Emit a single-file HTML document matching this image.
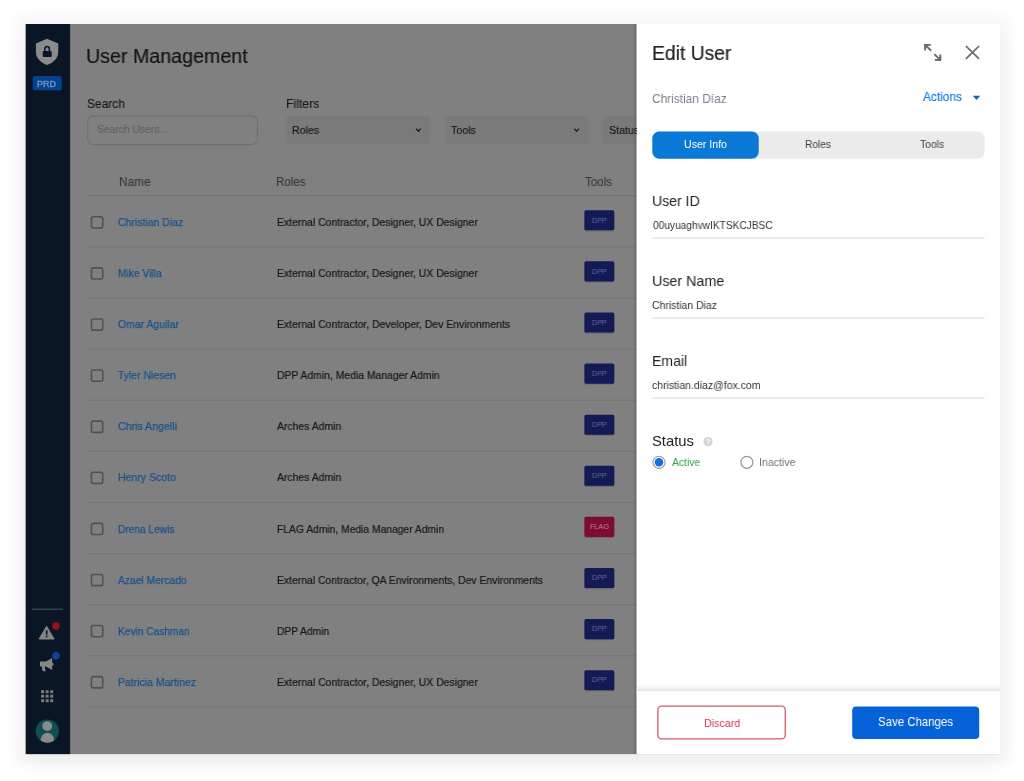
<!DOCTYPE html>
<html lang="en">
<head>
<meta charset="utf-8">
<title>User Management</title>
<style>
*{box-sizing:border-box;margin:0;padding:0}
html,body{width:1024px;height:781px;overflow:hidden;background:#fff}
body{position:relative;font-family:"Liberation Sans",Arial,sans-serif;color:#1a1a1a}
svg{position:absolute;left:0;top:0;overflow:visible}
.shadow{position:absolute;left:26px;top:24px;width:974px;height:730px;background:#fff;box-shadow:0 0 8px 11px rgba(0,0,0,.024),0 8px 22px rgba(0,0,0,.062)}
.t{position:absolute;white-space:nowrap;line-height:1;transform-origin:0 50%;will-change:transform}
</style>
</head>
<body>
<div class="shadow"></div>
<svg width="1024" height="781" viewBox="0 0 1024 781">
<defs>
<linearGradient id="gl" x1="0" y1="0" x2="1" y2="0"><stop offset="0" stop-color="#000" stop-opacity="0"/><stop offset="1" stop-color="#000" stop-opacity=".22"/></linearGradient>
<linearGradient id="gf" x1="0" y1="0" x2="0" y2="1"><stop offset="0" stop-color="#000" stop-opacity="0"/><stop offset="1" stop-color="#000" stop-opacity=".085"/></linearGradient>
<clipPath id="av"><circle cx="47.3" cy="731.05" r="11.6"/></clipPath>
</defs>
<!-- dimmed main area -->
<rect x="25.75" y="24" width="974.25" height="730.1" fill="#808080"/>
<rect x="87.65" y="115.8" width="169.85" height="28.9" rx="6" fill="none" stroke="#6f6f6f" stroke-width="1.2"/>
<rect x="286.3" y="115.8" width="143.7" height="28.1" rx="3.5" fill="#7a7a7a"/>
<rect x="444.7" y="115.8" width="143.1" height="28.1" rx="3.5" fill="#7a7a7a"/>
<rect x="602.3" y="115.8" width="60" height="28.1" rx="3.5" fill="#7a7a7a"/>
<path d="M416 128.6 418.4 131.2 420.8 128.6M574.2 128.6 576.6 131.2 579 128.6" fill="none" stroke="#1c1c1c" stroke-width="1.3"/>
<rect x="88" y="195.00" width="548.5" height="1.2" fill="#747474"/>
<rect x="91.5" y="216.75" width="11.2" height="11.2" rx="1.7" fill="none" stroke="#515151" stroke-width="1.6"/>
<rect x="584.4" y="211.15" width="29.9" height="20.3" rx="1.8" fill="#000" opacity=".16"/>
<rect x="584.4" y="210.25" width="29.9" height="20.1" rx="1.6" fill="#141a54"/>
<rect x="88" y="246.40" width="548.5" height="1.2" fill="#767676"/>
<rect x="91.5" y="267.85" width="11.2" height="11.2" rx="1.7" fill="none" stroke="#515151" stroke-width="1.6"/>
<rect x="584.4" y="262.25" width="29.9" height="20.3" rx="1.8" fill="#000" opacity=".16"/>
<rect x="584.4" y="261.35" width="29.9" height="20.1" rx="1.6" fill="#141a54"/>
<rect x="88" y="297.50" width="548.5" height="1.2" fill="#767676"/>
<rect x="91.5" y="318.95" width="11.2" height="11.2" rx="1.7" fill="none" stroke="#515151" stroke-width="1.6"/>
<rect x="584.4" y="313.35" width="29.9" height="20.3" rx="1.8" fill="#000" opacity=".16"/>
<rect x="584.4" y="312.45" width="29.9" height="20.1" rx="1.6" fill="#141a54"/>
<rect x="88" y="348.60" width="548.5" height="1.2" fill="#767676"/>
<rect x="91.5" y="370.05" width="11.2" height="11.2" rx="1.7" fill="none" stroke="#515151" stroke-width="1.6"/>
<rect x="584.4" y="364.45" width="29.9" height="20.3" rx="1.8" fill="#000" opacity=".16"/>
<rect x="584.4" y="363.55" width="29.9" height="20.1" rx="1.6" fill="#141a54"/>
<rect x="88" y="399.70" width="548.5" height="1.2" fill="#767676"/>
<rect x="91.5" y="421.15" width="11.2" height="11.2" rx="1.7" fill="none" stroke="#515151" stroke-width="1.6"/>
<rect x="584.4" y="415.55" width="29.9" height="20.3" rx="1.8" fill="#000" opacity=".16"/>
<rect x="584.4" y="414.65" width="29.9" height="20.1" rx="1.6" fill="#141a54"/>
<rect x="88" y="450.80" width="548.5" height="1.2" fill="#767676"/>
<rect x="91.5" y="472.25" width="11.2" height="11.2" rx="1.7" fill="none" stroke="#515151" stroke-width="1.6"/>
<rect x="584.4" y="466.65" width="29.9" height="20.3" rx="1.8" fill="#000" opacity=".16"/>
<rect x="584.4" y="465.75" width="29.9" height="20.1" rx="1.6" fill="#141a54"/>
<rect x="88" y="501.90" width="548.5" height="1.2" fill="#767676"/>
<rect x="91.5" y="523.35" width="11.2" height="11.2" rx="1.7" fill="none" stroke="#515151" stroke-width="1.6"/>
<rect x="584.4" y="517.75" width="29.9" height="20.3" rx="1.8" fill="#000" opacity=".16"/>
<rect x="584.4" y="516.85" width="29.9" height="20.1" rx="1.6" fill="#7c0c32"/>
<rect x="88" y="553.00" width="548.5" height="1.2" fill="#767676"/>
<rect x="91.5" y="574.45" width="11.2" height="11.2" rx="1.7" fill="none" stroke="#515151" stroke-width="1.6"/>
<rect x="584.4" y="568.85" width="29.9" height="20.3" rx="1.8" fill="#000" opacity=".16"/>
<rect x="584.4" y="567.95" width="29.9" height="20.1" rx="1.6" fill="#141a54"/>
<rect x="88" y="604.10" width="548.5" height="1.2" fill="#767676"/>
<rect x="91.5" y="625.55" width="11.2" height="11.2" rx="1.7" fill="none" stroke="#515151" stroke-width="1.6"/>
<rect x="584.4" y="619.95" width="29.9" height="20.3" rx="1.8" fill="#000" opacity=".16"/>
<rect x="584.4" y="619.05" width="29.9" height="20.1" rx="1.6" fill="#141a54"/>
<rect x="88" y="655.20" width="548.5" height="1.2" fill="#767676"/>
<rect x="91.5" y="676.65" width="11.2" height="11.2" rx="1.7" fill="none" stroke="#515151" stroke-width="1.6"/>
<rect x="584.4" y="671.05" width="29.9" height="20.3" rx="1.8" fill="#000" opacity=".16"/>
<rect x="584.4" y="670.15" width="29.9" height="20.1" rx="1.6" fill="#141a54"/>
<rect x="88" y="706.30" width="548.5" height="1.2" fill="#767676"/>
<!-- sidebar -->
<rect x="25.75" y="24" width="44.4" height="730.1" fill="#0a1626"/>
<path transform="translate(35.9 38.8) scale(1.2444 1.1864) translate(-3 -1)" d="M12 1L3 4.9v7c0 5.3 4 9.4 9 11.1 5-1.7 9-5.8 9-11.1v-7z" fill="#8b8b8b"/>
<rect x="42.7" y="50.9" width="8.95" height="6" rx=".9" fill="#0a1626"/>
<path d="M44.85 51.5V48.7a2.25 2.25 0 0 1 4.5 0V51.5" fill="none" stroke="#0a1626" stroke-width="1.5"/>
<rect x="32.8" y="76" width="28.95" height="14.3" rx="2.6" fill="#04438f"/>
<rect x="31.7" y="608.7" width="31.2" height="1" fill="#4a5462"/>
<path d="M46.6 626.3 54.1 639H39.1z" fill="#858585" stroke="#858585" stroke-width="1" stroke-linejoin="round"/>
<rect x="45.8" y="630.4" width="1.7" height="4.2" fill="#0a1626"/>
<rect x="45.8" y="635.7" width="1.7" height="1.6" fill="#0a1626"/>
<circle cx="55.97" cy="625.9" r="3.75" fill="#94141a"/>
<path d="M40 661.6h5.8l6.4-3.7v12.2l-6.4-3.7H40z M41.7 666.4h3l.9 4.8h-3z" fill="#858585"/>
<path d="M52.2 662.4a1.9 1.9 0 0 1 0 3.6z" fill="#858585"/>
<circle cx="55.97" cy="655.8" r="3.75" fill="#08459b"/>
<g fill="#7a7a7a">
<rect x="41.1" y="690.2" width="3" height="3"/><rect x="45.65" y="690.2" width="3" height="3"/><rect x="50.2" y="690.2" width="3" height="3"/>
<rect x="41.1" y="694.7" width="3" height="3"/><rect x="45.65" y="694.7" width="3" height="3"/><rect x="50.2" y="694.7" width="3" height="3"/>
<rect x="41.1" y="699.2" width="3" height="3"/><rect x="45.65" y="699.2" width="3" height="3"/><rect x="50.2" y="699.2" width="3" height="3"/>
</g>
<circle cx="47.3" cy="731.05" r="11.6" fill="#0e4f56"/>
<g clip-path="url(#av)" fill="#8a8a8a"><circle cx="47.26" cy="726.1" r="4.95"/><ellipse cx="47.4" cy="741.2" rx="7" ry="8.4"/></g>
<!-- panel -->
<rect x="633.3" y="24" width="3.2" height="730.1" fill="url(#gl)"/>
<rect x="636.5" y="24" width="363.5" height="730.1" fill="#fff"/>
<path d="M972.8 95.8h7.5L976.55 100z" fill="#1060d8"/>
<g fill="none" stroke="#6a6a6a">
<path d="M930.75 44.85H925.15V50.4M925.4 45.1 931.2 50.7" stroke-width="1.9"/>
<path d="M924.2 43.9h5.4l-5.4 5.4z" fill="#6a6a6a" stroke="none"/>
<path d="M934.8 59.85h5.45V54.4M940 59.6 934.3 54.1" stroke-width="1.9"/>
<path d="M941.2 60.8h-5.4l5.4-5.4z" fill="#6a6a6a" stroke="none"/>
<path d="M965.9 46 979.1 58.9M979.1 46 965.9 58.9" stroke-width="1.7"/>
</g>
<rect x="652.3" y="131.5" width="332.3" height="27.25" rx="7" fill="#ebebeb"/>
<rect x="652.3" y="131.5" width="106.45" height="27.25" rx="7" fill="#0a78d7"/>
<rect x="652.3" y="237.5" width="332.4" height="1.05" fill="#dadada"/>
<rect x="652.3" y="317.5" width="332.4" height="1.05" fill="#dadada"/>
<rect x="652.3" y="397.5" width="332.4" height="1.05" fill="#dadada"/>
<circle cx="708.05" cy="441.6" r="4.65" fill="#d6d6d6"/>
<circle cx="659" cy="462.3" r="6.05" fill="#fff" stroke="#9a9a9a" stroke-width="1.1"/>
<circle cx="659" cy="462.3" r="4.25" fill="#0f72dd"/>
<circle cx="746.9" cy="462.3" r="6" fill="#fff" stroke="#979797" stroke-width="1.2"/>
<!-- footer -->
<rect x="636.5" y="684.2" width="363.5" height="6.5" fill="url(#gf)"/>
<rect x="636.5" y="690.3" width="363.5" height=".8" fill="#e2e2e2"/>
<rect x="657.85" y="706.05" width="127.4" height="32.9" rx="3.6" fill="#fff" stroke="#d9566b" stroke-width="1.3"/>
<rect x="852.2" y="706.4" width="127" height="32.6" rx="4" fill="#0562d8"/>
</svg>

<!-- dimmed main content text -->
<div class="t " style="left:86.39px;top:46.00px;font-size:20.5px;color:#141414;transform:scaleX(0.9586);-webkit-text-stroke:0.2px #141414;">User Management</div>
<div class="t " style="left:87.36px;top:98.00px;font-size:12.8px;color:#181818;transform:scaleX(0.9347);-webkit-text-stroke:0.15px #181818;">Search</div>
<div class="t " style="left:285.70px;top:98.00px;font-size:12.8px;color:#181818;transform:scaleX(0.9541);-webkit-text-stroke:0.15px #181818;">Filters</div>
<div class="t " style="left:96.84px;top:124.00px;font-size:11px;color:#606060;transform:scaleX(0.9353);-webkit-text-stroke:0.15px #606060;">Search Users...</div>
<div class="t " style="left:291.98px;top:125.00px;font-size:10.8px;color:#161616;transform:scaleX(0.9814);-webkit-text-stroke:0.15px #161616;">Roles</div>
<div class="t " style="left:451.17px;top:125.00px;font-size:10.8px;color:#161616;transform:scaleX(0.9814);-webkit-text-stroke:0.15px #161616;">Tools</div>
<div style="position:absolute;left:600px;top:115px;width:36.5px;height:30px;overflow:hidden"><div style="position:absolute;left:-600px;top:-115px"><div class="t " style="left:608.82px;top:125.00px;font-size:10.8px;color:#161616;transform:scaleX(0.9814);-webkit-text-stroke:0.15px #161616;">Status</div></div></div>
<div class="t " style="left:118.93px;top:176.00px;font-size:12.2px;color:#3a3a3a;transform:scaleX(0.9742);-webkit-text-stroke:0.15px #3a3a3a;">Name</div>
<div class="t " style="left:275.75px;top:176.00px;font-size:12.2px;color:#3a3a3a;transform:scaleX(0.9472);-webkit-text-stroke:0.15px #3a3a3a;">Roles</div>
<div class="t " style="left:585.25px;top:176.00px;font-size:12.2px;color:#3a3a3a;transform:scaleX(0.9472);-webkit-text-stroke:0.15px #3a3a3a;">Tools</div>
<div class="t " style="left:117.78px;top:217.00px;font-size:11px;color:#1a518c;transform:scaleX(0.9514);-webkit-text-stroke:0.25px #1a518c;">Christian Diaz</div>
<div class="t " style="left:276.65px;top:217.00px;font-size:11px;color:#161616;transform:scaleX(0.9466);-webkit-text-stroke:0.2px #161616;">External Contractor, Designer, UX Designer</div>
<div class="t " style="left:591.61px;top:217.00px;font-size:7.8px;color:#626ba3;transform:scaleX(0.9272);">DPP</div>
<div class="t " style="left:118.06px;top:268.00px;font-size:11px;color:#1a518c;transform:scaleX(0.9330);-webkit-text-stroke:0.25px #1a518c;">Mike Villa</div>
<div class="t " style="left:276.65px;top:268.00px;font-size:11px;color:#161616;transform:scaleX(0.9466);-webkit-text-stroke:0.2px #161616;">External Contractor, Designer, UX Designer</div>
<div class="t " style="left:591.61px;top:268.00px;font-size:7.8px;color:#626ba3;transform:scaleX(0.9272);">DPP</div>
<div class="t " style="left:117.81px;top:319.00px;font-size:11px;color:#1a518c;transform:scaleX(0.9497);-webkit-text-stroke:0.25px #1a518c;">Omar Aguilar</div>
<div class="t " style="left:276.64px;top:319.00px;font-size:11px;color:#161616;transform:scaleX(0.9481);-webkit-text-stroke:0.2px #161616;">External Contractor, Developer, Dev Environments</div>
<div class="t " style="left:591.61px;top:319.00px;font-size:7.8px;color:#626ba3;transform:scaleX(0.9272);">DPP</div>
<div class="t " style="left:118.07px;top:370.00px;font-size:11px;color:#1a518c;transform:scaleX(0.9470);-webkit-text-stroke:0.25px #1a518c;">Tyler Niesen</div>
<div class="t " style="left:276.65px;top:370.00px;font-size:11px;color:#161616;transform:scaleX(0.9443);-webkit-text-stroke:0.2px #161616;">DPP Admin, Media Manager Admin</div>
<div class="t " style="left:591.61px;top:370.00px;font-size:7.8px;color:#626ba3;transform:scaleX(0.9272);">DPP</div>
<div class="t " style="left:117.77px;top:421.00px;font-size:11px;color:#1a518c;transform:scaleX(0.9641);-webkit-text-stroke:0.25px #1a518c;">Chris Angelli</div>
<div class="t " style="left:277.48px;top:421.00px;font-size:11px;color:#161616;transform:scaleX(0.9459);-webkit-text-stroke:0.2px #161616;">Arches Admin</div>
<div class="t " style="left:591.61px;top:421.00px;font-size:7.8px;color:#626ba3;transform:scaleX(0.9272);">DPP</div>
<div class="t " style="left:118.04px;top:472.00px;font-size:11px;color:#1a518c;transform:scaleX(0.9566);-webkit-text-stroke:0.25px #1a518c;">Henry Scoto</div>
<div class="t " style="left:277.48px;top:472.00px;font-size:11px;color:#161616;transform:scaleX(0.9459);-webkit-text-stroke:0.2px #161616;">Arches Admin</div>
<div class="t " style="left:591.61px;top:472.00px;font-size:7.8px;color:#626ba3;transform:scaleX(0.9272);">DPP</div>
<div class="t " style="left:118.07px;top:524.00px;font-size:11px;color:#1a518c;transform:scaleX(0.9225);-webkit-text-stroke:0.25px #1a518c;">Drena Lewis</div>
<div class="t " style="left:276.66px;top:524.00px;font-size:11px;color:#161616;transform:scaleX(0.9360);-webkit-text-stroke:0.2px #161616;">FLAG Admin, Media Manager Admin</div>
<div class="t " style="left:590.00px;top:523.00px;font-size:7.8px;color:#bd8a9f;transform:scaleX(0.9344);">FLAG</div>
<div class="t " style="left:118.28px;top:575.00px;font-size:11px;color:#1a518c;transform:scaleX(0.9356);-webkit-text-stroke:0.25px #1a518c;">Azael Mercado</div>
<div class="t " style="left:276.65px;top:575.00px;font-size:11px;color:#161616;transform:scaleX(0.9435);-webkit-text-stroke:0.2px #161616;">External Contractor, QA Environments, Dev Environments</div>
<div class="t " style="left:591.61px;top:574.00px;font-size:7.8px;color:#626ba3;transform:scaleX(0.9272);">DPP</div>
<div class="t " style="left:118.07px;top:626.00px;font-size:11px;color:#1a518c;transform:scaleX(0.9232);-webkit-text-stroke:0.25px #1a518c;">Kevin Cashman</div>
<div class="t " style="left:276.66px;top:626.00px;font-size:11px;color:#161616;transform:scaleX(0.9295);-webkit-text-stroke:0.2px #161616;">DPP Admin</div>
<div class="t " style="left:591.61px;top:625.00px;font-size:7.8px;color:#626ba3;transform:scaleX(0.9272);">DPP</div>
<div class="t " style="left:118.04px;top:677.00px;font-size:11px;color:#1a518c;transform:scaleX(0.9531);-webkit-text-stroke:0.25px #1a518c;">Patricia Martinez</div>
<div class="t " style="left:276.65px;top:677.00px;font-size:11px;color:#161616;transform:scaleX(0.9466);-webkit-text-stroke:0.2px #161616;">External Contractor, Designer, UX Designer</div>
<div class="t " style="left:591.61px;top:676.00px;font-size:7.8px;color:#626ba3;transform:scaleX(0.9272);">DPP</div>
<div class="t " style="left:37.16px;top:80.00px;font-size:9px;color:#7594c3;transform:scaleX(1.0035);-webkit-text-stroke:0.35px #7594c3;">PRD</div>

<!-- panel text -->
<div class="t " style="left:651.82px;top:43.00px;font-size:20.2px;color:#1f1f1f;transform:scaleX(0.9558);-webkit-text-stroke:0.2px #1f1f1f;">Edit User</div>
<div class="t " style="left:652.21px;top:92.00px;font-size:13px;color:#7a7f8b;transform:scaleX(0.9141);">Christian Díaz</div>
<div class="t " style="left:922.68px;top:91.00px;font-size:12.8px;color:#1a7ce0;transform:scaleX(0.9268);-webkit-text-stroke:0.2px #1a7ce0;">Actions</div>
<div class="t " style="left:683.79px;top:139.00px;font-size:10.6px;color:#ffffff;transform:scaleX(0.9927);">User Info</div>
<div class="t " style="left:805.37px;top:139.00px;font-size:10.6px;color:#404040;transform:scaleX(0.9593);">Roles</div>
<div class="t " style="left:919.67px;top:139.00px;font-size:10.6px;color:#404040;transform:scaleX(0.9741);">Tools</div>
<div class="t " style="left:651.52px;top:194.00px;font-size:14.8px;color:#232323;transform:scaleX(0.9519);">User ID</div>
<div class="t " style="left:652.50px;top:220.00px;font-size:10.7px;color:#333333;transform:scaleX(0.9500);">00uyuaghvwIKTSKCJBSC</div>
<div class="t " style="left:651.50px;top:274.00px;font-size:14.8px;color:#232323;transform:scaleX(0.9664);">User Name</div>
<div class="t " style="left:652.08px;top:300.00px;font-size:10.7px;color:#333333;transform:scaleX(0.9750);">Christian Diaz</div>
<div class="t " style="left:651.85px;top:354.00px;font-size:14.8px;color:#232323;transform:scaleX(0.9509);">Email</div>
<div class="t " style="left:652.16px;top:380.00px;font-size:10.7px;color:#333333;transform:scaleX(0.9806);">christian.diaz@fox.com</div>
<div class="t " style="left:652.24px;top:434.00px;font-size:14.8px;color:#232323;transform:scaleX(0.9912);">Status</div>
<div class="t" style="left:705.75px;top:438px;font-size:7.5px;font-weight:bold;color:#fff">?</div>
<div class="t " style="left:671.68px;top:457.00px;font-size:11px;color:#2fa14b;transform:scaleX(0.9441);">Active</div>
<div class="t " style="left:758.82px;top:457.00px;font-size:11px;color:#747474;transform:scaleX(0.9640);">Inactive</div>
<div class="t " style="left:703.62px;top:718.00px;font-size:11.2px;color:#c8384c;transform:scaleX(0.9551);">Discard</div>
<div class="t " style="left:878.19px;top:715.00px;font-size:13px;color:#ffffff;transform:scaleX(0.8798);">Save Changes</div>
</body>
</html>
